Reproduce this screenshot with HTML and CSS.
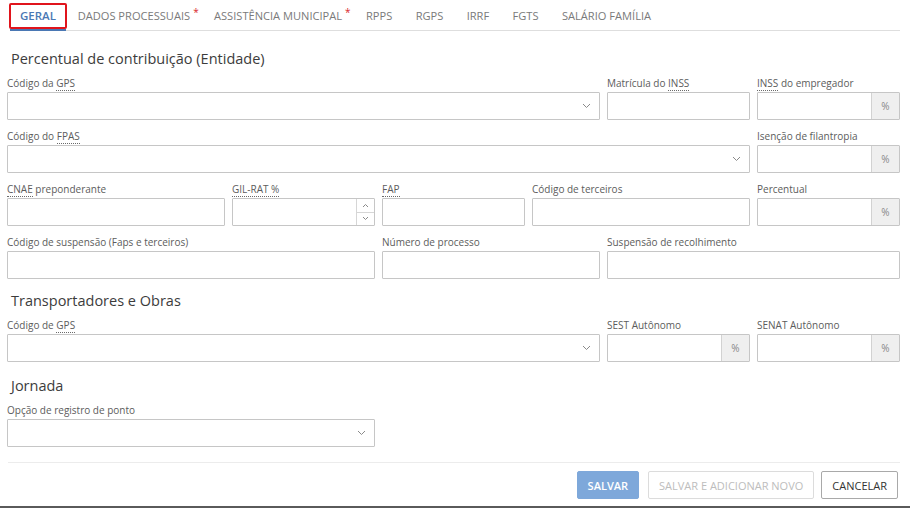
FILE: index.html
```html
<!DOCTYPE html>
<html lang="pt-BR">
<head>
<meta charset="utf-8">
<title>Geral</title>
<link rel="stylesheet" href="styles.css">
</head>
<body>
<div class="page">
  <nav class="tabs">
    <a class="tab active">GERAL</a>
    <a class="tab">DADOS PROCESSUAIS<span class="req">*</span></a>
    <a class="tab">ASSISTÊNCIA MUNICIPAL<span class="req">*</span></a>
    <a class="tab">RPPS</a>
    <a class="tab">RGPS</a>
    <a class="tab">IRRF</a>
    <a class="tab">FGTS</a>
    <a class="tab">SALÁRIO FAMÍLIA</a>
  </nav>

  <main class="form">
    <h2 class="section">Percentual de contribuição (Entidade)</h2>
    <div class="grid">
      <div class="field s8">
        <label>Código da <abbr>GPS</abbr></label>
        <div class="input select"><svg class="chev" width="9" height="6" viewBox="0 0 9 6"><path d="M1 1l3.5 3.5L8 1" fill="none" stroke="#8a8a8a" stroke-width="1"/></svg></div>
      </div>
      <div class="field s2">
        <label>Matrícula do <abbr>INSS</abbr></label>
        <div class="input"></div>
      </div>
      <div class="field s2">
        <label><abbr>INSS</abbr> do empregador</label>
        <div class="input group"><span class="fill"></span><span class="addon">%</span></div>
      </div>

      <div class="field s10">
        <label>Código do <abbr>FPAS</abbr></label>
        <div class="input select"><svg class="chev" width="9" height="6" viewBox="0 0 9 6"><path d="M1 1l3.5 3.5L8 1" fill="none" stroke="#8a8a8a" stroke-width="1"/></svg></div>
      </div>
      <div class="field s2">
        <label>Isenção de filantropia</label>
        <div class="input group"><span class="fill"></span><span class="addon">%</span></div>
      </div>

      <div class="field s3">
        <label><abbr>CNAE</abbr> preponderante</label>
        <div class="input"></div>
      </div>
      <div class="field s2">
        <label><abbr>GIL-RAT %</abbr></label>
        <div class="input group"><span class="fill"></span>
          <span class="spin">
            <span class="spin-btn"><svg width="7" height="5" viewBox="0 0 7 5"><path d="M1 4l2.5-2.5L6 4" fill="none" stroke="#8a8a8a" stroke-width="1"/></svg></span>
            <span class="spin-btn"><svg width="7" height="5" viewBox="0 0 7 5"><path d="M1 1l2.5 2.5L6 1" fill="none" stroke="#8a8a8a" stroke-width="1"/></svg></span>
          </span>
        </div>
      </div>
      <div class="field s2">
        <label><abbr>FAP</abbr></label>
        <div class="input"></div>
      </div>
      <div class="field s3">
        <label>Código de terceiros</label>
        <div class="input"></div>
      </div>
      <div class="field s2">
        <label>Percentual</label>
        <div class="input group"><span class="fill"></span><span class="addon">%</span></div>
      </div>

      <div class="field s5">
        <label>Código de suspensão (Faps e terceiros)</label>
        <div class="input"></div>
      </div>
      <div class="field s3">
        <label>Número de processo</label>
        <div class="input"></div>
      </div>
      <div class="field s4">
        <label>Suspensão de recolhimento</label>
        <div class="input"></div>
      </div>
    </div>

    <h2 class="section">Transportadores e Obras</h2>
    <div class="grid">
      <div class="field s8">
        <label>Código de <abbr>GPS</abbr></label>
        <div class="input select"><svg class="chev" width="9" height="6" viewBox="0 0 9 6"><path d="M1 1l3.5 3.5L8 1" fill="none" stroke="#8a8a8a" stroke-width="1"/></svg></div>
      </div>
      <div class="field s2">
        <label>SEST Autônomo</label>
        <div class="input group"><span class="fill"></span><span class="addon">%</span></div>
      </div>
      <div class="field s2">
        <label>SENAT Autônomo</label>
        <div class="input group"><span class="fill"></span><span class="addon">%</span></div>
      </div>
    </div>

    <h2 class="section section-last">Jornada</h2>
    <div class="grid">
      <div class="field s5">
        <label>Opção de registro de ponto</label>
        <div class="input select"><svg class="chev" width="9" height="6" viewBox="0 0 9 6"><path d="M1 1l3.5 3.5L8 1" fill="none" stroke="#8a8a8a" stroke-width="1"/></svg></div>
      </div>
    </div>
  </main>

  <footer class="actions">
    <button class="btn primary">SALVAR</button>
    <button class="btn disabled">SALVAR E ADICIONAR NOVO</button>
    <button class="btn">CANCELAR</button>
  </footer>
</div>
</body>
</html>
```

FILE: styles.css
```css
* { box-sizing: border-box; }
html, body { margin: 0; padding: 0; background: #fff; }
body {
  font-family: "Open Sans", "Liberation Sans", sans-serif;
  color: #555;
}
.page {
  height: 508px;
  display: flex;
  flex-direction: column;
  border-bottom: 2px solid #5a5a5a;
}

/* tabs */
.tabs {
  display: flex;
  margin: 0 10px;
  height: 31px;
  border-bottom: 1px solid #dedede;
}
.tab {
  position: relative;
  padding: 2px 11.7px 0;
  line-height: 28px;
  font-size: 11.1px;
  color: #7a7a7a;
  white-space: nowrap;
}
.tab .req {
  color: #d9262b;
  font-size: 10px;
  vertical-align: 4px;
  line-height: 0;
  margin-left: 3px;
  margin-right: -8px;
}
.tab.active {
  color: #4a78b4;
  font-weight: 600;
  font-size: 11.5px;
  padding: 2px 10px 0;
  border-bottom: 2px solid #4a78b4;
  margin-bottom: -1px;
}
.tab.active::before {
  content: "";
  position: absolute;
  left: -1px;
  right: -1px;
  top: 3px;
  bottom: 0;
  border: 2px solid #e0141c;
  border-radius: 2px;
}

/* form */
.form {
  padding: 0 10px 0 7px;
  flex: 1;
}
.section {
  margin: 18px 0 7px 4px;
  font-size: 14.5px;
  line-height: 20px;
  font-weight: 400;
  color: #3c3c3c;
}
.grid + .section { margin-top: 12px; }
.grid + .section-last { margin-top: 14px; }
.grid {
  display: grid;
  grid-template-columns: repeat(12, 1fr);
  column-gap: 7px;
  row-gap: 9px;
}
.s2 { grid-column: span 2; }
.s3 { grid-column: span 3; }
.s4 { grid-column: span 4; }
.s5 { grid-column: span 5; }
.s8 { grid-column: span 8; }
.s10 { grid-column: span 10; }

.field label {
  display: block;
  font-size: 10px;
  line-height: 14px;
  color: #5c5c5c;
  margin-bottom: 2px;
  white-space: nowrap;
}
abbr {
  text-decoration: none;
  border-bottom: 1px dotted #6a6a6a;
}
.input {
  height: 28px;
  border: 1px solid #c6c6c6;
  border-radius: 1px;
  background: #fff;
}
.select {
  display: flex;
  align-items: center;
  justify-content: flex-end;
  padding-right: 8px;
}
.group {
  display: flex;
}
.fill { flex: 1; }
.addon {
  width: 28px;
  background: #efefef;
  border-left: 1px solid #d2d2d2;
  font-size: 10px;
  color: #888;
  display: flex;
  align-items: center;
  justify-content: center;
}
.spin {
  width: 18px;
  border-left: 1px solid #d6d6d6;
  display: flex;
  flex-direction: column;
}
.spin-btn {
  flex: 1;
  display: flex;
  align-items: center;
  justify-content: center;
}
.spin-btn + .spin-btn { border-top: 1px solid #d6d6d6; }

/* footer */
.actions {
  margin: 0 10px 0 8px;
  border-top: 1px solid #ececec;
  padding: 8px 2px 7px 0;
  display: flex;
  justify-content: flex-end;
  gap: 7px;
}
.btn {
  font-family: inherit;
  height: 28px;
  padding: 0 10px;
  font-size: 11px;
  background: #fff;
  border: 1px solid #a9a9a9;
  border-radius: 2px;
  color: #333;
}
.btn.primary {
  background: #7ea8da;
  border-color: #7ea8da;
  color: #fff;
  font-weight: 600;
  margin-right: 2px;
}
.btn.disabled {
  border-color: #dcdcdc;
  color: #bdbdbd;
}
```
